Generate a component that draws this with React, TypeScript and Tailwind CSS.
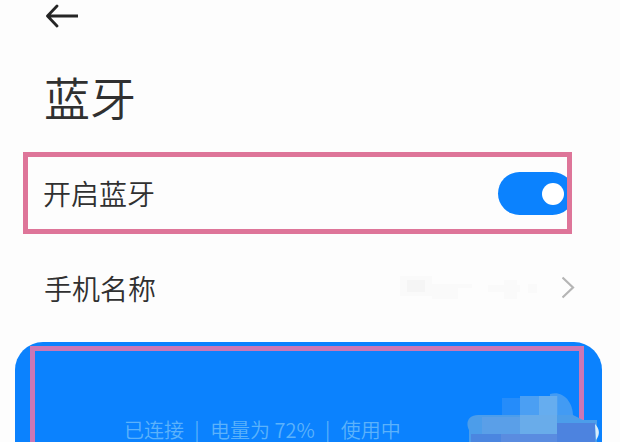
import { useState } from 'react';

const deviceStatus = ['已连接', '电量为 72%', '使用中'];

function BackArrow() {
  return (
    <svg width="34" height="24" viewBox="0 0 34 24" fill="none" stroke="#252525" strokeWidth="2.8" strokeLinecap="round" strokeLinejoin="round">
      <path d="M13 2 L3.5 12 L13 22 M4 12 H34" />
    </svg>
  );
}

// blurred-out phone name
function HiddenName() {
  return (
    <svg width="138" height="24" viewBox="0 0 138 24" aria-hidden="true">
      <path fill="#fafafa" d="M0 0h32v20H0z M32 8h40v4H58v11H32z M88 9h32v7H88z M104 4h13v19h-13z M128 8h9v9h-9z" />
      <path fill="#f5f5f5" d="M7 4h18v12H7z" />
    </svg>
  );
}

// mosaic painted over the corner of the device card
function Mosaic() {
  return (
    <svg width="136" height="50" viewBox="0 0 136 50" aria-hidden="true">
      <path fill="#258cfa" d="M36 6h18v18H36z" />
      <path fill="#429bf4" d="M84 2c12-4 23 7 23 22v5H84z" />
      <path fill="#4b9ff3" d="M54 4h38v22H54z" />
      <path fill="#66adef" d="M73 4h18v21H73z" />
      <path fill="#4c9dea" d="M12 23h95l10 5h14v22H3V38C-1 30 3 23 12 23z" />
      <path fill="#69acea" d="M54 23h37v19H54z" />
      <path fill="#5a9fe8" d="M16 25h38v17H16z" />
      <path fill="#4b86e0" d="M5 42h86v8H5z" />
      <path fill="#5a8ce0" d="M35 42h56v8H35z" />
      <path fill="#4d83df" d="M91 31h38v19H91z" />
      <path fill="#d8ecfa" d="M129 32c5 5 5 11 1 16z" />
    </svg>
  );
}

export default function App() {
  const [enabled, setEnabled] = useState(true);

  return (
    <main className="flex h-screen flex-col overflow-hidden bg-[#fdfdfd] font-['Noto_Sans_CJK_SC',sans-serif] text-[#303030]">
      <header className="px-11 pt-1">
        <button type="button" aria-label="返回" className="block">
          <BackArrow />
        </button>
        <h1 className="mt-8 text-[46px] leading-[72px] font-[350]">蓝牙</h1>
      </header>

      <label className="mt-5 mr-12 ml-[23px] flex h-[82px] shrink-0 items-center justify-between overflow-hidden border-5 border-[#de7599] pl-[15px] text-[28px] leading-10 font-[350]">
        开启蓝牙
        <input
          type="checkbox"
          role="switch"
          checked={enabled}
          onChange={(e) => setEnabled(e.target.checked)}
          className="relative -mr-[7px] h-[43px] w-[76px] shrink-0 appearance-none rounded-full bg-[#ccc] before:absolute before:top-[11px] before:left-3 before:size-[22px] before:rounded-full before:bg-white checked:bg-[#0b82fe] checked:before:left-[44px]"
        />
      </label>

      <button type="button" className="mr-11 ml-11 flex h-[108px] shrink-0 items-center justify-between text-[28px] leading-10 font-[350]">
        手机名称
        <span className="flex items-center gap-6">
          <HiddenName />
          <svg width="14" height="24" viewBox="0 0 14 24" fill="none" stroke="#b5b5b5" strokeWidth="2.2">
            <path d="M0.5 1.5 L11 11.5 L0.5 21.5" />
          </svg>
        </span>
      </button>

      <section className="relative mr-[18px] ml-[15px] flex flex-1 flex-col rounded-t-[28px] bg-[#0b82fe] pt-1 pr-[18px] pl-[15px]">
        <div className="flex-1 border-5 border-b-0 border-[#cb77b5] pt-[68px] pl-[89px]">
          <p className="flex text-[20px] leading-[22px] font-[350] whitespace-nowrap text-[#5cb2fb]">
            {deviceStatus.map((status, i) => (
              <span key={status} className="flex">
                {i > 0 && <span className="w-[26px] text-center">|</span>}
                {status}
              </span>
            ))}
          </p>
        </div>
        <div className="absolute right-0 bottom-0">
          <Mosaic />
        </div>
      </section>
    </main>
  );
}
